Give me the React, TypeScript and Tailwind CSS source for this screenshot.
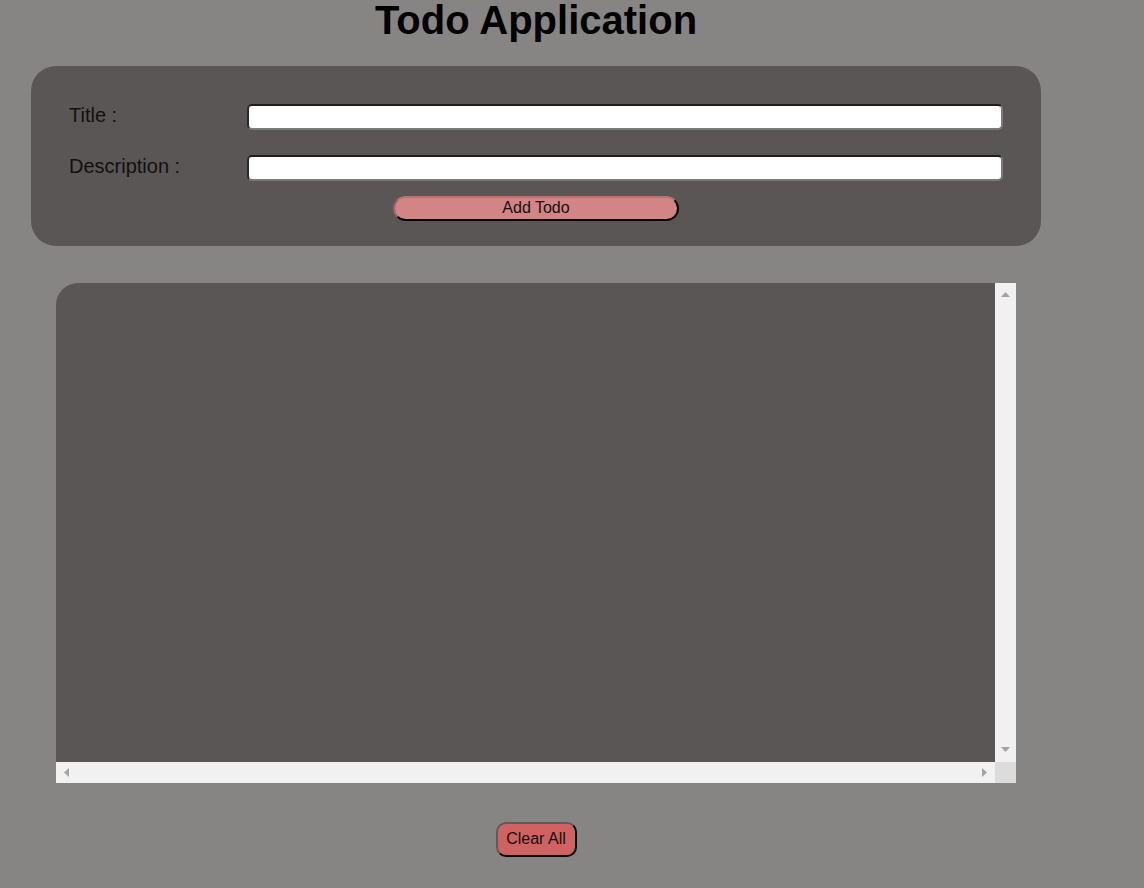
import { useState } from "react";

type Todo = { title: string; desc: string };

function Arrow({ dir }: { dir: "up" | "down" | "left" | "right" }) {
  const points = {
    up: "0,5 4.5,0 9,5",
    down: "0,0 9,0 4.5,5",
    left: "5,0 5,9 0,4.5",
    right: "0,0 5,4.5 0,9",
  }[dir];
  const vertical = dir === "up" || dir === "down";
  return (
    <svg width={vertical ? 9 : 5} height={vertical ? 5 : 9} viewBox={vertical ? "0 0 9 5" : "0 0 5 9"}>
      <polygon points={points} fill="#a3a3a3" />
    </svg>
  );
}

export default function App() {
  const [title, setTitle] = useState("");
  const [desc, setDesc] = useState("");
  const [todos, setTodos] = useState<Todo[]>([]);

  function addTodo() {
    if (!title.trim()) return;
    setTodos([...todos, { title: title.trim(), desc: desc.trim() }]);
    setTitle("");
    setDesc("");
  }

  return (
    <div className="min-h-[888px] w-full bg-[#868583] font-['Liberation_Sans',Arial,sans-serif] text-[#111]">
      <div className="w-[1072px] pb-[31px]">
        <h1 className="text-center text-[40px] font-bold leading-[40px] text-black">
          Todo Application
        </h1>

        <div className="ml-[31px] mt-[26px] h-[180px] w-[1010px] rounded-[25px] bg-[#5a5655] px-[38px] pt-[38px]">
          <div className="flex items-start">
            <label htmlFor="todo-title" className="w-[178px] text-[20px] leading-[23px]">
              Title :
            </label>
            <input
              id="todo-title"
              type="text"
              value={title}
              onChange={(e) => setTitle(e.target.value)}
              className="h-[26px] flex-1 rounded-[5px] border-2 border-t-[#1e1e1e] border-l-[#2a2a2a] border-b-[#7a7a7a] border-r-[#7a7a7a] bg-white px-1 text-[13px] outline-none"
            />
          </div>
          <div className="mt-[25px] flex items-start">
            <label htmlFor="todo-desc" className="w-[178px] text-[20px] leading-[23px]">
              Description :
            </label>
            <input
              id="todo-desc"
              type="text"
              value={desc}
              onChange={(e) => setDesc(e.target.value)}
              className="h-[26px] flex-1 rounded-[5px] border-2 border-t-[#1e1e1e] border-l-[#2a2a2a] border-b-[#7a7a7a] border-r-[#7a7a7a] bg-white px-1 text-[13px] outline-none"
            />
          </div>
          <div className="mt-[15px] flex justify-center">
            <button
              type="button"
              onClick={addTodo}
              className="h-[25px] w-[286px] rounded-full border-2 border-t-[#b97171] border-l-[#9c6464] border-b-black border-r-black bg-[#d38585] pb-[4px] text-[16px] leading-[19px] text-[#111]"
            >
              Add Todo
            </button>
          </div>
        </div>

        <div className="ml-[56px] mt-[37px] flex h-[500px] w-[960px]">
          <div className="flex flex-1 flex-col">
            <div className="flex-1 overflow-hidden rounded-tl-[22px] bg-[#5a5655] p-4">
              {todos.map((t, i) => (
                <div key={i} className="mb-2 text-white">
                  <div className="font-bold">{t.title}</div>
                  <div className="text-sm">{t.desc}</div>
                </div>
              ))}
            </div>
            <div className="flex h-[21px] items-center justify-between bg-[#f1f1f1] pl-[8px] pr-[8px]">
              <Arrow dir="left" />
              <Arrow dir="right" />
            </div>
          </div>
          <div className="flex w-[21px] flex-col">
            <div className="flex flex-1 flex-col items-center justify-between bg-[#f1f1f1] pb-[10px] pt-[9px]">
              <Arrow dir="up" />
              <Arrow dir="down" />
            </div>
            <div className="h-[21px] bg-[#dcdcdc]" />
          </div>
        </div>

        <div className="mt-[39px] flex justify-center">
          <button
            type="button"
            onClick={() => setTodos([])}
            className="h-[35px] w-[81px] rounded-[10px] border-2 border-t-[#5c5c5c] border-l-[#5c5c5c] border-b-black border-r-black bg-[#d06262] pb-[2px] text-[16px] text-[#111]"
          >
            Clear All
          </button>
        </div>
      </div>
    </div>
  );
}
